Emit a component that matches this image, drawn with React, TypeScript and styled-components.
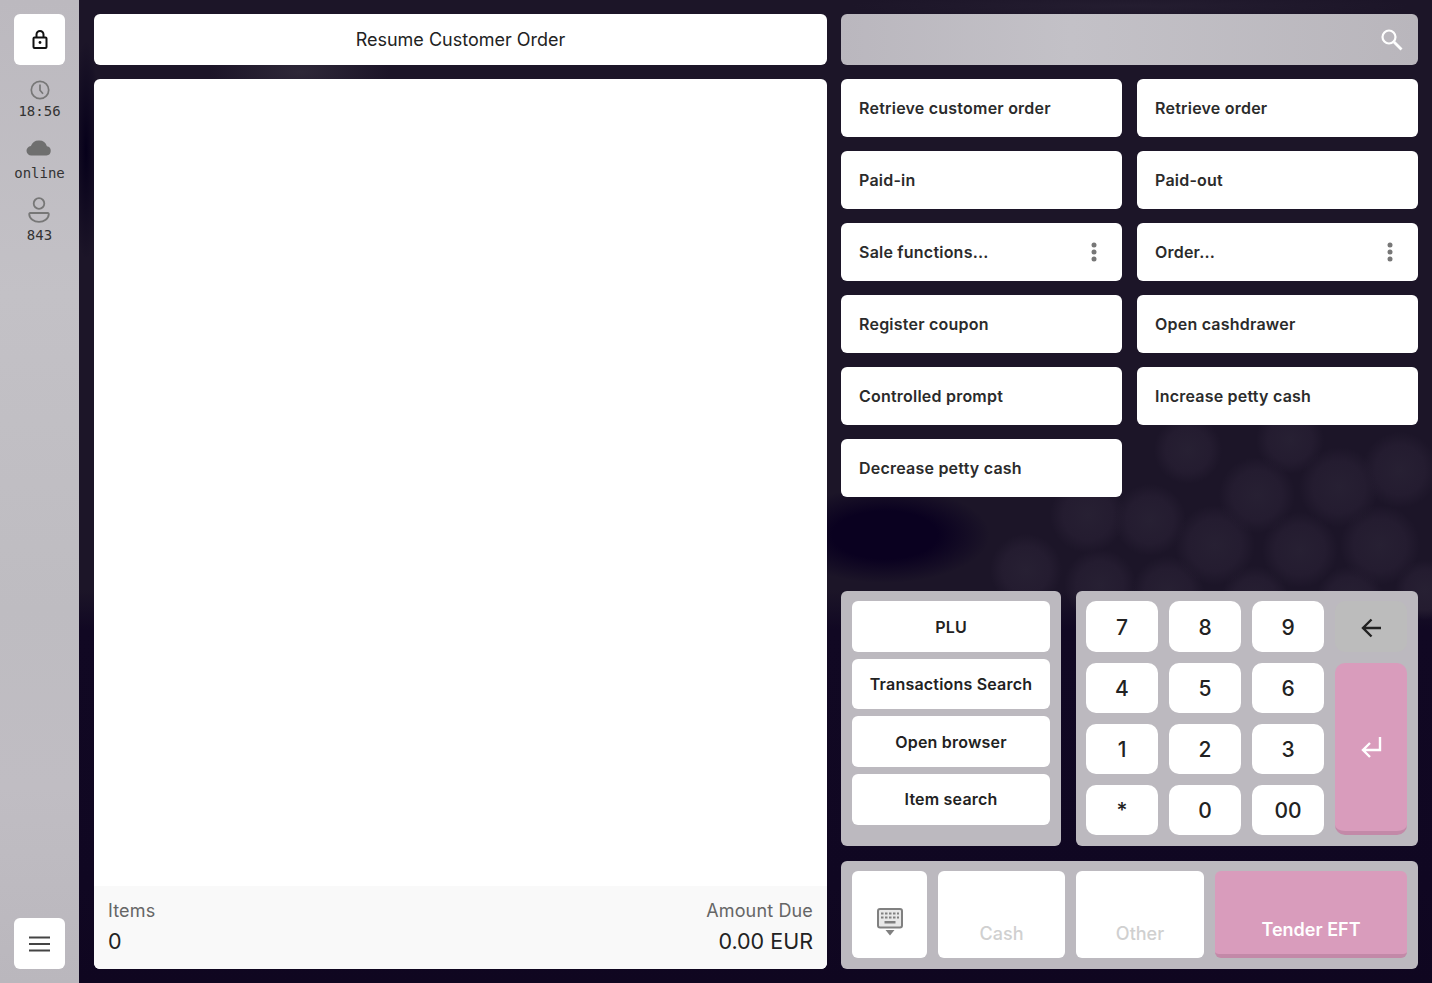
import React from "react";
import styled, { createGlobalStyle } from "styled-components";

// rough stand-ins for the blurred produce photo behind the panels: x, y, radius
const blobs: [number, number, number][] = [
  [1257, 495, 38],
  [1339, 487, 40],
  [1400, 470, 38],
  [1188, 450, 34],
  [1290, 440, 34],
  [1150, 520, 36],
  [1088, 515, 38],
  [1215, 545, 40],
  [1300, 550, 38],
  [1380, 545, 40],
  [1026, 570, 36],
  [1100, 585, 36],
  [1168, 592, 36],
  [1255, 600, 34],
  [1350, 600, 34],
  [1425, 590, 30],
];

const blobLayers = blobs
  .map(([x, y, r]) => `radial-gradient(circle ${r}px at ${x}px ${y}px, #272033 0, #241c30 65%, transparent 100%)`)
  .join(",\n      ");

const GlobalStyle = createGlobalStyle`
  html, body {
    margin: 0;
    height: 100%;
    overflow: hidden;
  }
  body {
    font-family: Inter, "Liberation Sans", sans-serif;
    color: #222;
    background-color: #1a1326;
    background-image:
      ${blobLayers},
      radial-gradient(ellipse 105px 48px at 885px 535px, #0a0120 0, #0a0120 50%, transparent 100%),
      radial-gradient(ellipse 90px 30px at 300px 72px, #2e2838 0, transparent 100%),
      radial-gradient(ellipse 14px 110px at 86px 150px, #06001a 0, transparent 100%),
      radial-gradient(ellipse 280px 14px at 1130px 6px, #241d30 0, transparent 100%),
      linear-gradient(180deg, #1c1528 0, #1c1528 60%, #110823 64%, #100722 90%, #0f0620 100%);
  }
  #root {
    height: 100%;
  }
`;

const Page = styled.div`
  display: grid;
  grid-template-columns: 79px 1fr;
  height: 983px;
`;

const Sidebar = styled.aside`
  display: flex;
  flex-direction: column;
  align-items: center;
  padding: 14px 0;
  box-sizing: border-box;
  background: linear-gradient(180deg, #bcb9bf 0, #c3c1c6 30%, #bebcc1 62%, #c0bdc3 80%, #bab7bd 100%);
`;

const SideButton = styled.button`
  width: 51px;
  height: 51px;
  flex: none;
  padding: 0;
  display: flex;
  align-items: center;
  justify-content: center;
  border: 0;
  border-radius: 6px;
  background: #fff;
`;

const Status = styled.div<{ $top: number; $gap: number }>`
  display: flex;
  flex-direction: column;
  align-items: center;
  font-family: "DejaVu Sans Mono", "Liberation Mono", monospace;
  font-size: 14px;
  line-height: 16px;
  color: #333;
  margin-top: ${(p) => p.$top}px;

  svg {
    display: block;
    margin-bottom: ${(p) => p.$gap}px;
  }
`;

const Spacer = styled.div`
  flex: 1;
`;

const Main = styled.main`
  display: grid;
  grid-template-columns: 733px 577px;
  column-gap: 14px;
  padding: 14px 14px 14px 15px;
  box-sizing: border-box;
  height: 983px;
`;

const LeftColumn = styled.section`
  display: flex;
  flex-direction: column;
  gap: 14px;
  min-height: 0;
`;

const TitleBar = styled.div`
  height: 51px;
  flex: none;
  display: flex;
  align-items: center;
  justify-content: center;
  background: #fff;
  border-radius: 6px;
  font-size: 18px;
`;

const Receipt = styled.div`
  flex: 1;
  display: flex;
  flex-direction: column;
  justify-content: flex-end;
  background: #fff;
  border-radius: 6px;
  overflow: hidden;
`;

const Totals = styled.div`
  height: 83px;
  box-sizing: border-box;
  padding: 14px 14px 0;
  display: flex;
  justify-content: space-between;
  background: #f9f9f9;
`;

const Total = styled.div<{ $right?: boolean }>`
  display: flex;
  flex-direction: column;
  gap: 6px;
  align-items: ${(p) => (p.$right ? "flex-end" : "flex-start")};
`;

const TotalLabel = styled.span`
  font-size: 18px;
  line-height: 22px;
  letter-spacing: 0.15px;
  color: #666;
`;

const TotalValue = styled.span`
  font-size: 21.5px;
  line-height: 27px;
  color: #222;
`;

const RightColumn = styled.section`
  display: flex;
  flex-direction: column;
  min-height: 0;
`;

const SearchBar = styled.div`
  height: 51px;
  flex: none;
  display: flex;
  align-items: center;
  justify-content: flex-end;
  padding-right: 14px;
  border-radius: 6px;
  background: linear-gradient(90deg, #bab7be 0, #c3c1c7 40%, #b9b6bc 100%);
`;

const ActionGrid = styled.div`
  display: grid;
  grid-template-columns: 281px 281px;
  justify-content: space-between;
  grid-auto-rows: 58px;
  row-gap: 14px;
  margin-top: 14px;
  flex: 1;
`;

const ActionButton = styled.button`
  display: flex;
  align-items: center;
  justify-content: space-between;
  padding: 0 18px;
  border: 0;
  border-radius: 6px;
  background: #fff;
  color: #2b2b2b;
  font-family: inherit;
  font-size: 16px;
  font-weight: 600;
  letter-spacing: 0.22px;
  text-align: left;
`;

const Kebab = styled.svg`
  margin-right: 7px;
`;

const PadRow = styled.div`
  display: grid;
  grid-template-columns: 220px 342px;
  justify-content: space-between;
  height: 255px;
  flex: none;
`;

const Panel = styled.div`
  border-radius: 6px;
  background: #bcb9bf;
  box-sizing: border-box;
`;

const ShortcutPanel = styled(Panel)`
  display: flex;
  flex-direction: column;
  gap: 7.2px;
  padding: 10px 11px;
`;

const ShortcutButton = styled.button`
  height: 50.5px;
  flex: none;
  padding: 0;
  border: 0;
  border-radius: 6px;
  background: #fff;
  color: #222;
  font-family: inherit;
  font-size: 16px;
  font-weight: 600;
  letter-spacing: 0.2px;

  &:first-child {
    padding-top: 1px;
  }
`;

const NumPanel = styled(Panel)`
  display: grid;
  grid-template-columns: repeat(4, 72px);
  grid-template-rows: 51px 50px 50px 50px;
  justify-content: space-between;
  row-gap: 11px;
  padding: 10px 11px 10px 10px;
`;

const NumKey = styled.button`
  border: 0;
  padding: 1px 0 0;
  border-radius: 10px;
  background: #fff;
  color: #222;
  font-family: inherit;
  font-size: 21px;
  font-weight: 500;
`;

const BackKey = styled(NumKey)`
  display: flex;
  align-items: center;
  justify-content: center;
  padding-top: 2px;
  background: #bcbcbc;
`;

const EnterKey = styled(NumKey)`
  grid-column: 4;
  grid-row: 2 / span 3;
  display: flex;
  align-items: center;
  justify-content: center;
  padding: 0;
  background: #d99cbc;
  border-bottom: 4px solid #c389a8;
`;

const TenderPanel = styled(Panel)`
  display: grid;
  grid-template-columns: 75px 127px 128px 192px;
  justify-content: space-between;
  height: 108px;
  flex: none;
  margin-top: 15px;
  padding: 10px 11px 11px;
`;

const KeyboardButton = styled.button`
  display: flex;
  align-items: center;
  justify-content: center;
  padding: 14px 0 0 0;
  border: 0;
  border-radius: 6px;
  background: #fff;
`;

const TenderButton = styled.button`
  display: flex;
  align-items: flex-end;
  justify-content: center;
  padding: 0 0 13px;
  border: 0;
  border-radius: 6px;
  background: #fff;
  color: #d0d0d0;
  font-family: inherit;
  font-size: 18px;
  font-weight: 500;
  line-height: 22px;
`;

const PrimaryTender = styled(TenderButton)`
  background: #d99cbc;
  color: #fff;
  font-weight: 600;
  border-bottom: 4px solid #c389a8;
`;

const LockIcon = () => (
  <svg width="24" height="24" viewBox="0 0 24 24" fill="none" stroke="#111" strokeWidth="2">
    <path d="M8.500 9.500V6.500a3.500 3.500 0 0 1 7 0V9.500" />
    <rect x="5.500" y="9.500" width="13" height="10.500" rx="1" />
    <circle cx="12" cy="14.500" r="1.400" fill="#111" stroke="none" />
  </svg>
);

const ClockIcon = () => (
  <svg width="22" height="22" viewBox="0 0 22 22" fill="none" stroke="#777" strokeWidth="1.700">
    <circle cx="11" cy="11" r="8.700" />
    <path d="M11 5.500V11.300L14 14.800" />
  </svg>
);

const CloudIcon = () => (
  <svg width="26" height="16" viewBox="0 0 26 16" fill="#6f6f6f">
    <path d="M5.500 15.500a4.700 4.700 0 0 1-.6-9.400A8.300 8.300 0 0 1 13 .5a8 8 0 0 1 7.900 5.700 4.700 4.700 0 0 1-.4 9.300Z" />
  </svg>
);

const PersonIcon = () => (
  <svg width="22" height="26" viewBox="0 0 22 26" fill="none" stroke="#777" strokeWidth="1.800">
    <circle cx="11" cy="6.500" r="5.300" />
    <path d="M2.200 16h17.600a1 1 0 0 1 1 1.100C20.500 22 16 24.900 11 24.900S1.500 22 1.200 17.100a1 1 0 0 1 1-1.100Z" />
  </svg>
);

const MenuIcon = () => (
  <svg width="22" height="16" viewBox="0 0 22 16" stroke="#444" strokeWidth="2">
    <path d="M0 1.500h21M0 8h21M0 14.500h21" />
  </svg>
);

const SearchIcon = () => (
  <svg width="24" height="24" viewBox="0 0 24 24" fill="none" stroke="#fff" strokeWidth="2.200">
    <circle cx="9" cy="9" r="6.500" />
    <path d="M14 14 21.500 21.500" strokeWidth="2.800" />
  </svg>
);

const KebabIcon = () => (
  <Kebab width="6" height="20" viewBox="0 0 6 20" fill="#777">
    <circle cx="3" cy="3" r="2.500" />
    <circle cx="3" cy="10" r="2.500" />
    <circle cx="3" cy="17" r="2.500" />
  </Kebab>
);

const BackIcon = () => (
  <svg width="22" height="22" viewBox="0 0 22 22" fill="none" stroke="#222" strokeWidth="2.400">
    <path d="M21 11H3M11.500 2.500 3 11l8.500 8.500" />
  </svg>
);

const EnterIcon = () => (
  <svg width="22" height="22" viewBox="0 0 22 22" fill="none" stroke="#fff" strokeWidth="2.400">
    <path d="M20 1V14H3M10 7 3 14l7 7" />
  </svg>
);

const KeyboardIcon = () => (
  <svg width="26" height="28" viewBox="0 0 26 28" fill="#808080">
    <rect x="1" y="1" width="24" height="18.500" rx="2" fill="#e8e8e8" stroke="#808080" strokeWidth="2" />
    <path d="M4 4.500h2.500v2H4Zm4 0h2.500v2H8Zm4 0h2.500v2H12Zm4 0h2.500v2H16Zm4 0h2v2h-2ZM4 8.500h2.500v2H4Zm4 0h2.500v2H8Zm4 0h2.500v2H12Zm4 0h2.500v2H16Zm4 0h2v2h-2ZM7.500 13h11v2.500h-11Z" />
    <path d="M8.500 22h9L13 27.500Z" />
  </svg>
);

const actions = [
  { label: "Retrieve customer order" },
  { label: "Retrieve order" },
  { label: "Paid-in" },
  { label: "Paid-out" },
  { label: "Sale functions...", more: true },
  { label: "Order...", more: true },
  { label: "Register coupon" },
  { label: "Open cashdrawer" },
  { label: "Controlled prompt" },
  { label: "Increase petty cash" },
  { label: "Decrease petty cash" },
];

const shortcuts = ["PLU", "Transactions Search", "Open browser", "Item search"];

const App = () => {
  return (
    <Page>
      <GlobalStyle />
      <Sidebar>
        <SideButton aria-label="Lock">
          <LockIcon />
        </SideButton>
        <Status $top={14} $gap={2}>
          <ClockIcon />
          18:56
        </Status>
        <Status $top={21} $gap={9}>
          <CloudIcon />
          online
        </Status>
        <Status $top={16} $gap={4}>
          <PersonIcon />
          843
        </Status>
        <Spacer />
        <SideButton aria-label="Menu">
          <MenuIcon />
        </SideButton>
      </Sidebar>

      <Main>
        <LeftColumn>
          <TitleBar>Resume Customer Order</TitleBar>
          <Receipt>
            <Totals>
              <Total>
                <TotalLabel>Items</TotalLabel>
                <TotalValue>0</TotalValue>
              </Total>
              <Total $right>
                <TotalLabel>Amount Due</TotalLabel>
                <TotalValue>0.00 EUR</TotalValue>
              </Total>
            </Totals>
          </Receipt>
        </LeftColumn>

        <RightColumn>
          <SearchBar>
            <SearchIcon />
          </SearchBar>
          <ActionGrid>
            {actions.map((a) => (
              <ActionButton key={a.label}>
                {a.label}
                {a.more && <KebabIcon />}
              </ActionButton>
            ))}
          </ActionGrid>
          <PadRow>
            <ShortcutPanel>
              {shortcuts.map((s) => (
                <ShortcutButton key={s}>{s}</ShortcutButton>
              ))}
            </ShortcutPanel>
            <NumPanel>
              <NumKey>7</NumKey>
              <NumKey>8</NumKey>
              <NumKey>9</NumKey>
              <BackKey aria-label="Back">
                <BackIcon />
              </BackKey>
              <NumKey>4</NumKey>
              <NumKey>5</NumKey>
              <NumKey>6</NumKey>
              <EnterKey aria-label="Enter">
                <EnterIcon />
              </EnterKey>
              <NumKey>1</NumKey>
              <NumKey>2</NumKey>
              <NumKey>3</NumKey>
              <NumKey>*</NumKey>
              <NumKey>0</NumKey>
              <NumKey>00</NumKey>
            </NumPanel>
          </PadRow>
          <TenderPanel>
            <KeyboardButton aria-label="Keyboard">
              <KeyboardIcon />
            </KeyboardButton>
            <TenderButton>Cash</TenderButton>
            <TenderButton>Other</TenderButton>
            <PrimaryTender>Tender EFT</PrimaryTender>
          </TenderPanel>
        </RightColumn>
      </Main>
    </Page>
  );
};

export default App;
